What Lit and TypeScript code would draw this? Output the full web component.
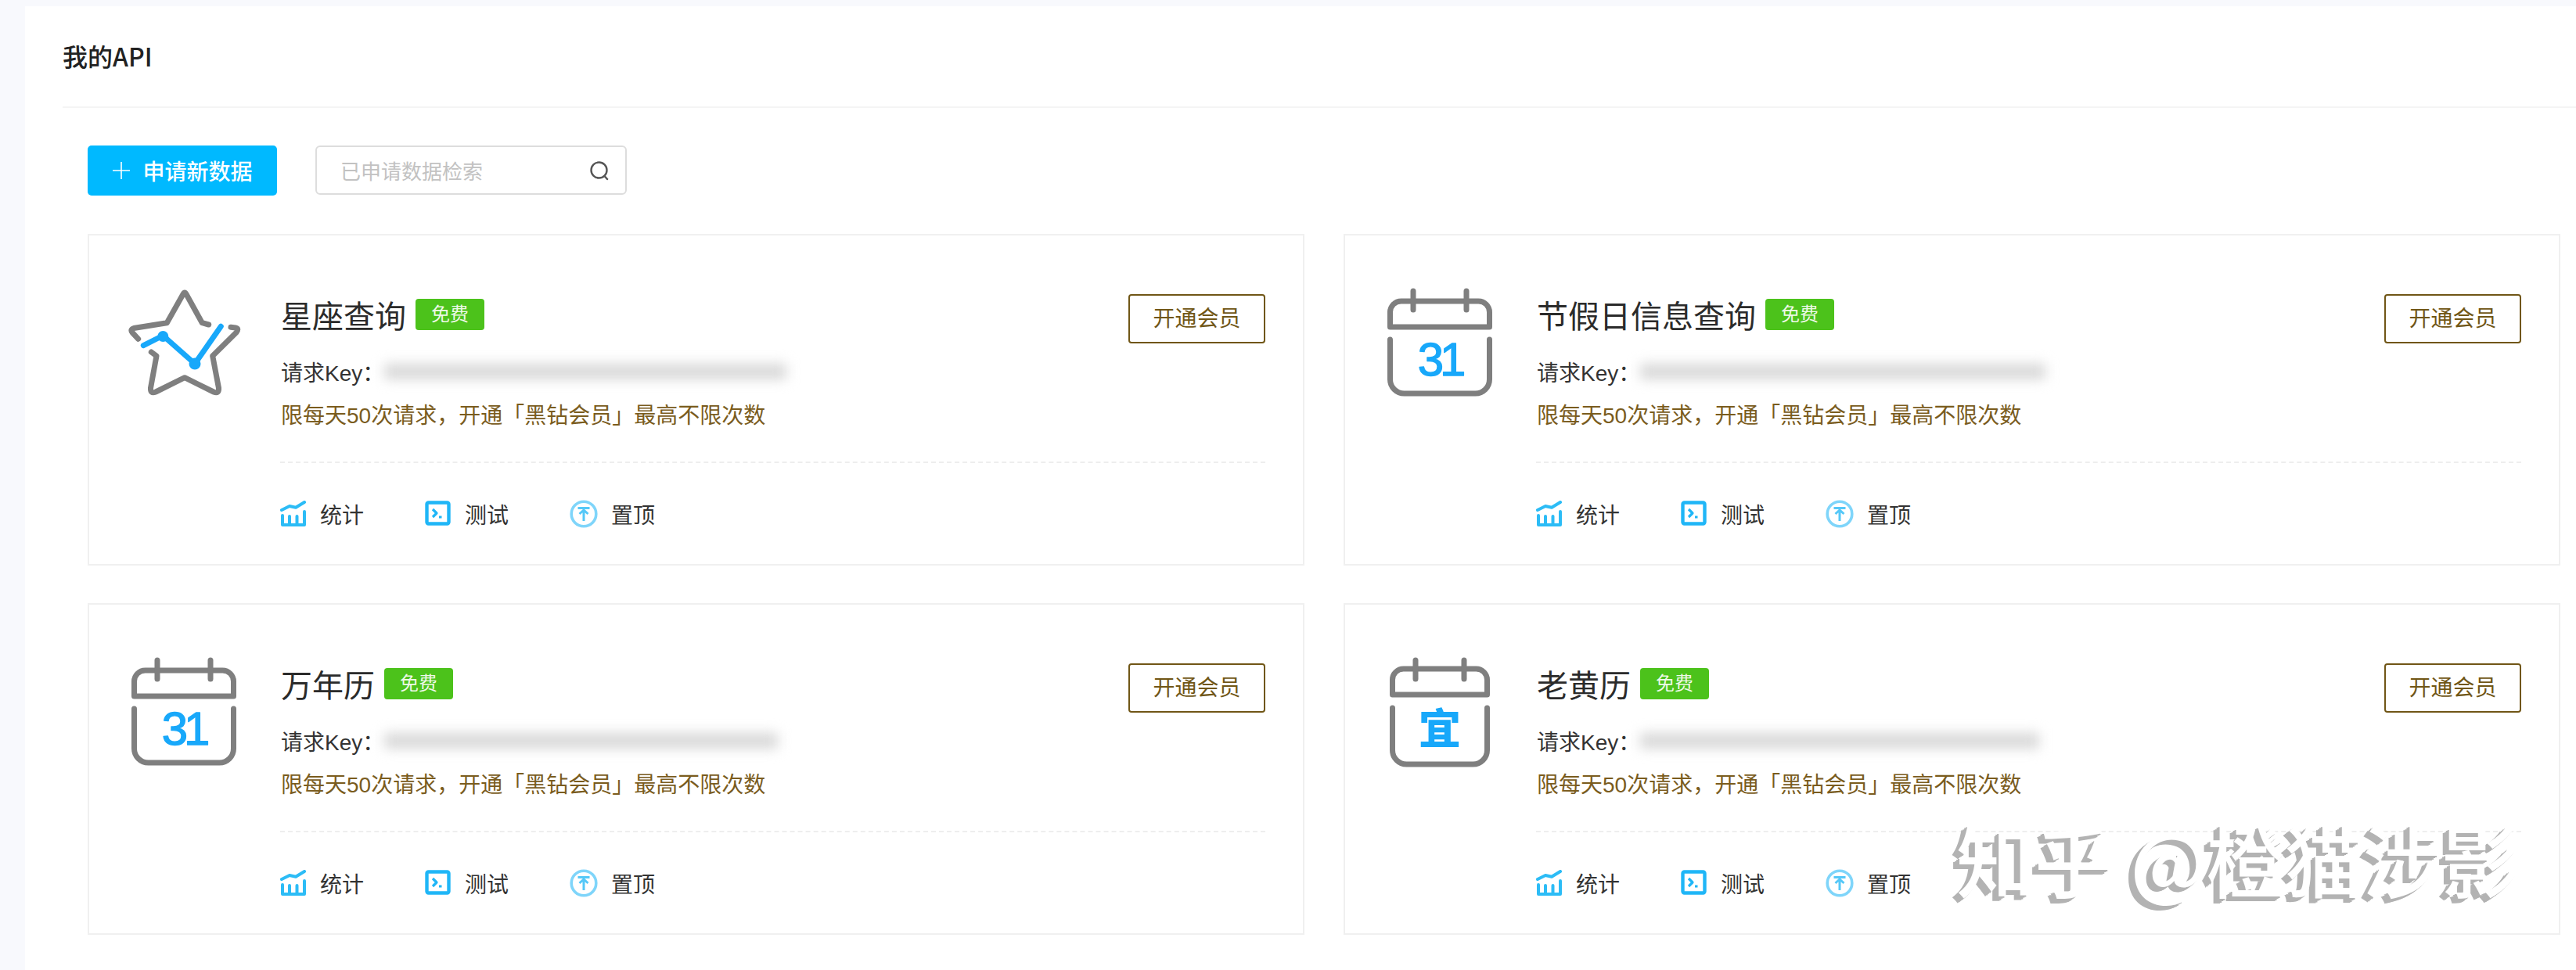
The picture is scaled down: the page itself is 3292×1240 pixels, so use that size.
import { LitElement, html, css, svg } from "lit";
import { customElement } from "lit/decorators.js";

const GRAY = "#7f7f7f";
const BLUE = "#18a8fa";

const calendarBody = (l: number, r: number, top: number, mid: number, low: number, bottom: number, p1: number, p2: number) => svg`
  <g fill="none" stroke=${GRAY} stroke-width="7" stroke-linecap="round" stroke-linejoin="round">
    <path d="M${l} ${mid}V${top + 14}a14 14 0 0 1 14-14H${r - 14}a14 14 0 0 1 14 14V${mid}Z" />
    <path d="M${l} ${low}V${bottom - 18}a18 18 0 0 0 18 18H${r - 18}a18 18 0 0 0 18-18V${low}" />
    <path d="M${p1} 7V31M${p2} 7V31" />
  </g>
`;

const icons: Record<string, unknown> = {
  star: svg`
    <path fill="none" stroke=${GRAY} stroke-width="7" stroke-linecap="round" stroke-linejoin="round"
      d="M105.7 50 97.3 47.7 77 11Q75 7 73 11L52.3 47.7 10 54.5Q5 56 8 60L15.7 68.3M32.3 85 39 90 31.5 131Q31 139 38 136L75 117.7 112 136Q119 139 118.5 131L110.7 90 141 60Q145 55 140 54L134 53.3" />
    <path fill="none" stroke=${BLUE} stroke-width="7" stroke-linecap="round" stroke-linejoin="round"
      d="M22.3 76.7 47.3 64 88 100 121.3 52.3" />
    <circle cx="47.3" cy="65" r="7" fill=${BLUE} />
    <circle cx="88" cy="100" r="7.5" fill=${BLUE} />
  `,
  cal31: svg`
    ${calendarBody(10.5, 137.5, 20, 53, 69, 138, 40, 108)}
    <text class="cal-num" x="74" y="115" text-anchor="middle" font-size="60" letter-spacing="-5">31</text>
  `,
  calYi: svg`
    ${calendarBody(13.5, 134.5, 18, 51, 68, 140, 43, 105)}
    <text class="cal-yi" x="74" y="115" text-anchor="middle" font-size="54">宜</text>
  `,
};

const statIcon = svg`
  <svg width="34" height="34" viewBox="0 0 34 34" fill="none" stroke="#2cbcf6" stroke-width="4" stroke-linecap="round" stroke-linejoin="round">
    <path d="M2 12 12 7 20 8.7 31 2" />
    <path d="M3 19V31H31V14M12 20V29M21.5 20V29" />
  </svg>
`;

const testIcon = svg`
  <svg width="34" height="34" viewBox="0 0 34 34" fill="none" stroke="#1fb6f7" stroke-width="4.4" stroke-linejoin="round">
    <rect x="2.5" y="2.5" width="28" height="27" rx="2" />
    <path d="M10 11 15 16 10 21M18 21H21.5" stroke-width="3.2" />
  </svg>
`;

const topIcon = svg`
  <svg width="36" height="36" viewBox="0 0 36 36" fill="none" stroke="#7fd5fa" stroke-width="3.6">
    <circle cx="18" cy="18" r="15.8" />
    <path d="M10.5 10.5H25.5M12.5 18 18 13 23.5 18M18 13.5V27" stroke="#55c8f8" stroke-width="3" />
  </svg>
`;

const searchIcon = svg`
  <svg width="26" height="26" viewBox="0 0 26 26" fill="none" stroke="#555" stroke-width="2.4" stroke-linecap="round">
    <circle cx="12.5" cy="12.5" r="10" />
    <path d="M19.5 20 23 24" />
  </svg>
`;

const plusIcon = svg`
  <svg width="24" height="24" viewBox="0 0 24 24" stroke="#fff" stroke-width="1.6">
    <path d="M12 1V23M1 12H23" />
  </svg>
`;

const apis = [
  { name: "星座查询", icon: "star", keyWidth: 514 },
  { name: "节假日信息查询", icon: "cal31", keyWidth: 518 },
  { name: "万年历", icon: "cal31", keyWidth: 503 },
  { name: "老黄历", icon: "calYi", keyWidth: 510 },
];

@customElement("app-root")
export class AppRoot extends LitElement {
  static styles = css`
    :host {
      display: block;
      position: relative;
      height: 1240px;
      overflow: hidden;
      box-sizing: border-box;
      padding: 8px 0 0 32px;
      background: #f8f9fd;
      font-family: "Liberation Sans", "Noto Sans CJK SC", sans-serif;
      color: #333;
    }

    .panel {
      height: 100%;
      background: #fff;
      padding-left: 48px;
    }

    .panel-title {
      height: 128px;
      line-height: 126px;
      border-bottom: 2px solid #f4f4f4;
      font-family: "Noto Sans CJK SC", sans-serif;
      font-size: 32px;
      font-weight: 500;
      color: #222;
    }

    .panel-body {
      padding: 48px 20px 0 32px;
    }

    .toolbar {
      display: flex;
      align-items: flex-start;
      gap: 49px;
      height: 64px;
      margin-bottom: 49px;
    }

    .add-btn {
      display: flex;
      align-items: center;
      justify-content: center;
      gap: 15px;
      width: 242px;
      height: 64px;
      background: #00b9ff;
      border-radius: 5px;
      color: #fff;
      font-size: 28px;
      font-weight: 500;
    }

    .search {
      display: flex;
      align-items: center;
      justify-content: space-between;
      box-sizing: border-box;
      width: 398px;
      height: 63px;
      padding: 0 20px 0 30px;
      border: 2px solid #ddd;
      border-radius: 6px;
      color: #c2c2c2;
      font-size: 26px;
    }

    .cards {
      display: grid;
      grid-template-columns: 1fr 1fr;
      gap: 48px 50px;
    }

    .card {
      display: flex;
      box-sizing: border-box;
      height: 424px;
      border: 2px solid #f0f0f0;
    }

    .card-icon {
      flex: none;
      width: 150px;
      height: 150px;
      margin: 64px 48px 0 47px;
    }

    .cal-num {
      font-family: "Liberation Sans", sans-serif;
      fill: #18a8fa;
      stroke: #18a8fa;
      stroke-width: 1.3;
      stroke-linejoin: round;
    }

    .cal-yi {
      font-family: "Noto Sans CJK SC", sans-serif;
      font-weight: 900;
      fill: #18a8fa;
    }

    .card-main {
      flex: 1;
      min-width: 0;
      padding: 75px 48px 0 0;
    }

    .head {
      display: flex;
      justify-content: space-between;
      height: 63px;
    }

    .head-title {
      display: flex;
      align-items: center;
      height: 52px;
      font-size: 40px;
      color: #2b2b2b;
    }

    .tag {
      width: 88px;
      height: 40px;
      line-height: 40px;
      margin-left: 12px;
      text-align: center;
      background: #4cc21b;
      border-radius: 4px;
      color: #eef9e8;
      font-size: 24px;
    }

    .open-btn {
      box-sizing: border-box;
      width: 175px;
      height: 63px;
      line-height: 60px;
      text-align: center;
      border: 2px solid #705616;
      border-radius: 4px;
      color: #705616;
      font-size: 28px;
    }

    .key {
      display: flex;
      align-items: center;
      height: 40px;
      margin-top: 16px;
      font-size: 28px;
    }

    .key-blur {
      height: 20px;
      background: #d8d8d8;
      filter: blur(8px);
    }

    .limit {
      height: 40px;
      line-height: 40px;
      margin-top: 17px;
      color: #7a5c1e;
      font-size: 28px;
    }

    .actions {
      display: flex;
      gap: 78px;
      margin: 38px 0 0 -1px;
      padding-top: 45px;
      border-top: 2px dashed #eee;
    }

    .action {
      display: flex;
      align-items: center;
      gap: 17px;
      height: 40px;
      font-size: 28px;
    }

    .watermark {
      position: absolute;
      left: 2500px;
      top: 1032px;
      line-height: 130px;
      white-space: nowrap;
      font-family: "Noto Sans CJK SC", sans-serif;
      font-size: 100px;
      font-weight: 500;
      color: #fff;
      text-shadow: -2px 2px 0 #b3b3b3, -4px 3px 0 #b3b3b3, -6px 5px 0 #b3b3b3, -8px 6px 0 #b3b3b3;
    }
  `;

  renderCard(api: { name: string; icon: string; keyWidth: number }) {
    return html`
      <div class="card">
        <svg class="card-icon" viewBox="0 0 150 150">${icons[api.icon]}</svg>
        <div class="card-main">
          <div class="head">
            <div class="head-title">${api.name}<span class="tag">免费</span></div>
            <div class="open-btn">开通会员</div>
          </div>
          <div class="key">
            请求Key：<span class="key-blur" style="width:${api.keyWidth}px"></span>
          </div>
          <div class="limit">限每天50次请求，开通「黑钻会员」最高不限次数</div>
          <div class="actions">
            <div class="action">${statIcon}统计</div>
            <div class="action">${testIcon}测试</div>
            <div class="action">${topIcon}置顶</div>
          </div>
        </div>
      </div>
    `;
  }

  render() {
    return html`
      <div class="panel">
        <div class="panel-title">我的API</div>
        <div class="panel-body">
          <div class="toolbar">
            <div class="add-btn">${plusIcon}申请新数据</div>
            <div class="search">已申请数据检索${searchIcon}</div>
          </div>
          <div class="cards">${apis.map((api) => this.renderCard(api))}</div>
        </div>
      </div>
      <div class="watermark">知乎 @橙猫涉影</div>
    `;
  }
}
